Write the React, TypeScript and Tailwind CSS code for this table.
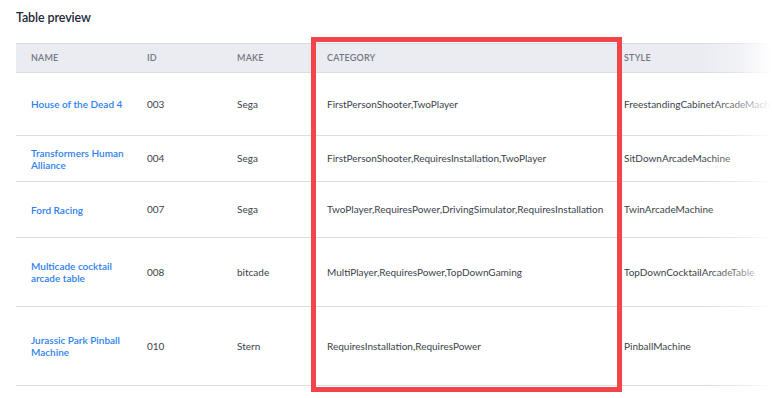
import React from "react";

type Row = { name: string; id: string; make: string; category: string; style: string; h: string };

const rows: Row[] = [
  { name: "House of the Dead 4", id: "003", make: "Sega", category: "FirstPersonShooter,TwoPlayer", style: "FreestandingCabinetArcadeMachine", h: "h-[63px]" },
  { name: "Transformers Human Alliance", id: "004", make: "Sega", category: "FirstPersonShooter,RequiresInstallation,TwoPlayer", style: "SitDownArcadeMachine", h: "h-[46px]" },
  { name: "Ford Racing", id: "007", make: "Sega", category: "TwoPlayer,RequiresPower,DrivingSimulator,RequiresInstallation", style: "TwinArcadeMachine", h: "h-[56px]" },
  { name: "Multicade cocktail arcade table", id: "008", make: "bitcade", category: "MultiPlayer,RequiresPower,TopDownGaming", style: "TopDownCocktailArcadeTable", h: "h-[69px]" },
  { name: "Jurassic Park Pinball Machine", id: "010", make: "Stern", category: "RequiresInstallation,RequiresPower", style: "PinballMachine", h: "h-[79px]" },
];

export default function App() {
  return (
    <div className="relative w-[772px] h-[398px] overflow-hidden bg-white font-['Lato',sans-serif] text-[#3b3f4a]">
      <div className="h-[43px] pl-4 pt-[9px] text-[12.5px] font-semibold text-[#232838] tracking-[-0.1px]">
        Table preview
      </div>
      <div className="ml-4 w-[900px]">
        <div className="flex h-[30px] items-center border-y border-[#d9dbe3] bg-[#ebecf2] text-[9px] font-semibold uppercase tracking-[0.2px] text-[#737784]">
          <div className="w-[116px] shrink-0 pl-[15px]">Name</div>
          <div className="w-[90px] shrink-0 pl-[15px]">ID</div>
          <div className="w-[90px] shrink-0 pl-[15px]">Make</div>
          <div className="w-[297px] shrink-0 pl-[15px]">Category</div>
          <div className="w-[250px] shrink-0 pl-[15px]">Style</div>
        </div>
        {rows.map((r) => (
          <div key={r.id} className={`flex items-center border-b border-[#dcdde5] text-[10px] ${r.h}`}>
            <div className="w-[116px] shrink-0 pl-[15px] font-semibold leading-[12px] text-[#2e7ff0]">{r.name}</div>
            <div className="w-[90px] shrink-0 pl-[15px]">{r.id}</div>
            <div className="w-[90px] shrink-0 pl-[15px]">{r.make}</div>
            <div className="w-[297px] shrink-0 pl-[15px] whitespace-nowrap">{r.category}</div>
            <div className="w-[250px] shrink-0 pl-[15px] whitespace-nowrap">{r.style}</div>
          </div>
        ))}
      </div>
      <div className="pointer-events-none absolute right-0 top-[43px] h-[343px] w-[70px] bg-linear-to-r from-white/0 via-white/30 to-white" />
      <div className="pointer-events-none absolute left-[311px] top-[37px] h-[355px] w-[311px] border-[5px] border-[#f24549]" />
    </div>
  );
}
